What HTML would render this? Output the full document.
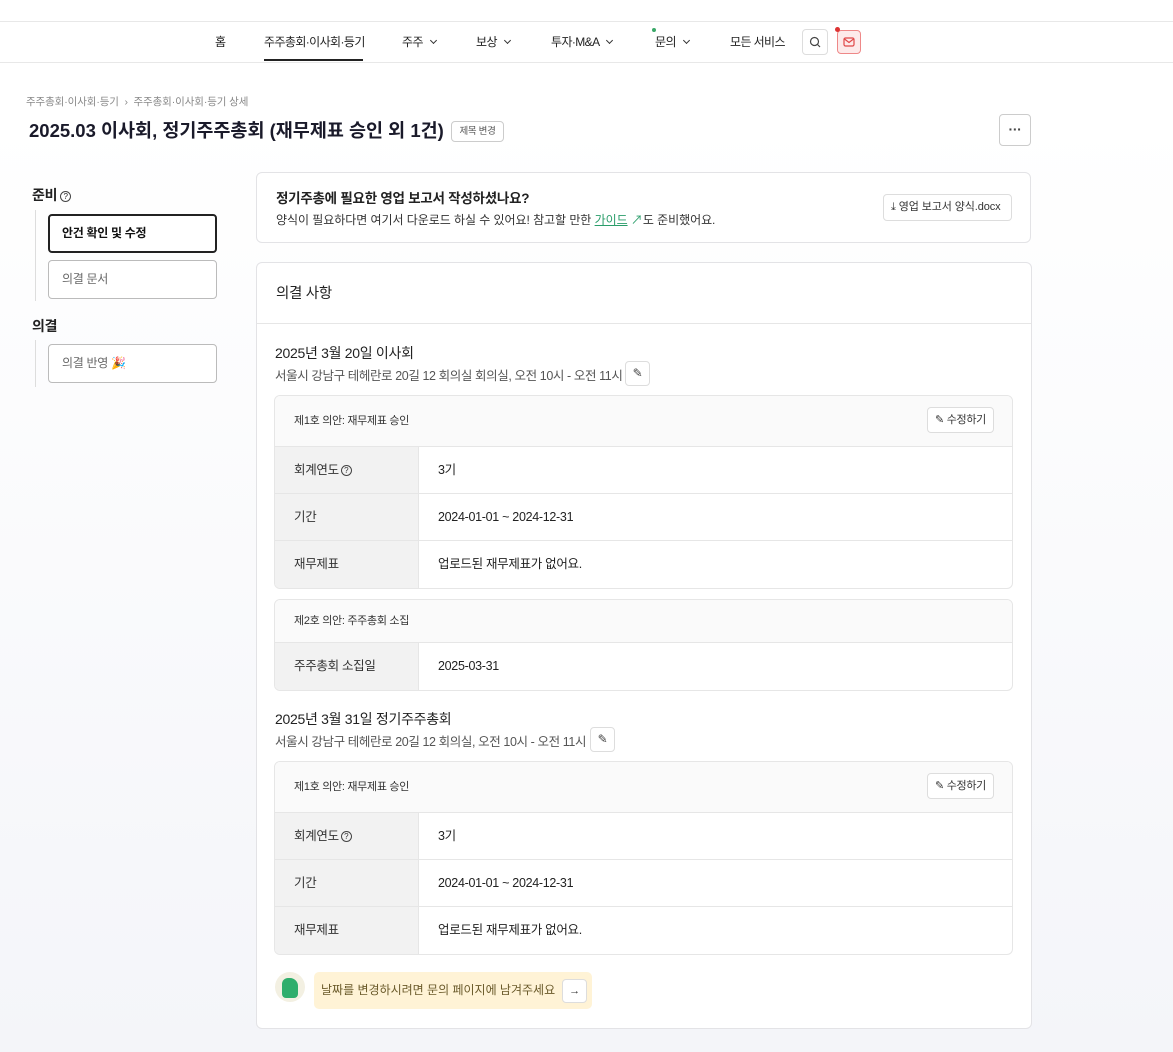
<!DOCTYPE html>
<html><head><meta charset="utf-8"><style>
*{box-sizing:border-box;margin:0;padding:0}
body{width:1173px;height:1052px;overflow:hidden;font-family:"Liberation Sans","Noto Sans CJK KR",sans-serif;color:#222;background:linear-gradient(#fff 0,#fff 120px,#f4f5f9 1052px);position:relative;font-size:13px;letter-spacing:-0.3px}
.a{position:absolute}
.nav{top:21px;left:0;width:1173px;height:42px;border-top:1px solid #e8e8e8;border-bottom:1px solid #e8e8e8;background:#fff}
.ni{position:absolute;top:11px;font-size:12px;color:#222;white-space:nowrap;letter-spacing:-0.6px}
.chev{display:inline-block;width:5px;height:5px;border-right:1.5px solid #333;border-bottom:1.5px solid #333;transform:rotate(45deg);margin-left:8px;position:relative;top:-3px}
.btn{position:absolute;background:#fff;border:1px solid #ddd;border-radius:4px}
.card{position:absolute;background:#fff;border:1px solid #e3e3e6;border-radius:6px}
.tbl{position:absolute;left:274px;width:739px;border:1px solid #e6e6e6;border-radius:6px;overflow:hidden;background:#fff}
.th{background:#fafafa;border-bottom:1px solid #e6e6e6;position:relative;font-size:11px;color:#333;padding-left:19px}
.tr{display:flex;height:47px;border-bottom:1px solid #e6e6e6;font-size:12.5px}
.tr:last-child{border-bottom:none}
.tl{width:144px;background:#f2f2f2;border-right:1px solid #e6e6e6;padding-left:19px;line-height:46px;color:#333}
.tv{padding-left:19px;line-height:46px;color:#222}
.q{display:inline-block;width:11px;height:11px;border:1px solid #444;border-radius:50%;font-size:8px;line-height:9px;text-align:center;vertical-align:middle;margin-left:2px;letter-spacing:0}
.edit{position:absolute;right:18px;top:11px;height:26px;padding:0 7px;border:1px solid #ddd;border-radius:4px;font-size:11px;line-height:24px;background:#fff}
.sb{position:absolute;left:48px;width:169px;height:39px;border:1px solid #bbb;border-radius:4px;background:#fff;padding-left:13px;line-height:37px;font-size:12px;color:#666}
</style></head><body>
<div class="a nav">
<span class="ni" style="left:215px">홈</span>
<span class="ni" style="left:264px">주주총회·이사회·등기</span>
<div class="a" style="left:264px;top:37px;width:99px;height:2px;background:#222"></div>
<span class="ni" style="left:402px">주주<i class="chev"></i></span>
<span class="ni" style="left:476px">보상<i class="chev"></i></span>
<span class="ni" style="left:551px">투자·M&amp;A<i class="chev"></i></span>
<span class="ni" style="left:655px">문의<i class="chev"></i></span>
<div class="a" style="left:652px;top:6px;width:4px;height:4px;border-radius:50%;background:#3aa868"></div>
<span class="ni" style="left:730px">모든 서비스</span>
<div class="btn" style="left:802px;top:7px;width:26px;height:26px"><svg width="24" height="24" viewBox="0 0 24 24"><circle cx="11.5" cy="11.5" r="4" fill="none" stroke="#444" stroke-width="1.2"/><path d="M14.5 14.5l2.5 2.5" stroke="#444" stroke-width="1.2"/></svg></div>
<div class="btn" style="left:837px;top:8px;width:24px;height:24px;background:#fdeaea;border-color:#e88"><svg width="22" height="22" viewBox="0 0 22 22"><rect x="6" y="7" width="10" height="8" rx="1.5" fill="none" stroke="#e04848" stroke-width="1.2"/><path d="M6.5 8l4.5 3.5 4.5-3.5" fill="none" stroke="#e04848" stroke-width="1.2"/></svg></div>
<div class="a" style="left:835px;top:5px;width:5px;height:5px;border-radius:50%;background:#d33"></div>
</div>
<div class="a" style="left:26px;top:94px;font-size:10.5px;color:#888;letter-spacing:-0.1px">주주총회·이사회·등기 &nbsp;›&nbsp; 주주총회·이사회·등기 상세</div>
<div class="a" style="left:29px;top:117px;font-size:18.5px;font-weight:bold;color:#1a1a2a;letter-spacing:0">2025.03 이사회, 정기주주총회 (재무제표 승인 외 1건)</div>
<div class="btn" style="left:451px;top:121px;width:53px;height:21px;font-size:9.5px;color:#555;text-align:center;line-height:19px;border-color:#ccc">제목 변경</div>
<div class="btn" style="left:999px;top:114px;width:32px;height:32px;border-color:#ccc;text-align:center;line-height:28px;font-size:14px;font-weight:bold;color:#444">···</div>

<div class="a" style="left:32px;top:185px;font-size:14px;font-weight:bold">준비<span class="q" style="font-weight:normal;margin-left:3px">?</span></div>
<div class="a" style="left:35px;top:210px;width:1px;height:91px;background:#ddd"></div>
<div class="sb" style="top:214px;border:2px solid #222;color:#111;font-weight:bold;line-height:35px;padding-left:12px">안건 확인 및 수정</div>
<div class="sb" style="top:260px">의결 문서</div>
<div class="a" style="left:32px;top:316px;font-size:14px;font-weight:bold">의결</div>
<div class="a" style="left:35px;top:340px;width:1px;height:47px;background:#ddd"></div>
<div class="sb" style="top:344px">의결 반영 🎉</div>

<div class="card" style="left:256px;top:172px;width:775px;height:71px">
<div class="a" style="left:19px;top:14px;font-size:13.5px;font-weight:bold;color:#222;letter-spacing:-0.25px">정기주총에 필요한 영업 보고서 작성하셨나요?</div>
<div class="a" style="left:19px;top:38px;font-size:12px;color:#333;letter-spacing:-0.05px">양식이 필요하다면 여기서 다운로드 하실 수 있어요! 참고할 만한 <span style="color:#2a9d6a;text-decoration:underline">가이드</span> <span style="color:#2a9d6a">↗</span>도 준비했어요.</div>
<div class="btn" style="left:626px;top:21px;width:129px;height:27px;font-size:11px;line-height:25px;padding-left:7px;color:#333;letter-spacing:-0.1px">⤓ 영업 보고서 양식.docx</div>
</div>

<div class="card" style="left:256px;top:262px;width:776px;height:767px">
<div class="a" style="left:19px;top:19px;font-size:14.5px">의결 사항</div>
<div class="a" style="left:0;top:60px;width:774px;height:1px;background:#e6e6e6"></div>
</div>

<div class="a" style="left:275px;top:343px;font-size:14px">2025년 3월 20일 이사회</div>
<div class="a" style="left:275px;top:365px;font-size:12.5px;color:#555;letter-spacing:-0.4px">서울시 강남구 테헤란로 20길 12 회의실 회의실, 오전 10시 - 오전 11시</div>
<div class="btn" style="left:625px;top:361px;width:25px;height:25px;text-align:center;line-height:23px;font-size:12px;color:#444">✎</div>

<div class="tbl" style="top:395px">
<div class="th" style="height:51px;line-height:50px">제1호 의안: 재무제표 승인<span class="edit">✎ 수정하기</span></div>
<div class="tr"><div class="tl">회계연도<span class="q">?</span></div><div class="tv">3기</div></div>
<div class="tr"><div class="tl">기간</div><div class="tv">2024-01-01 ~ 2024-12-31</div></div>
<div class="tr"><div class="tl">재무제표</div><div class="tv">업로드된 재무제표가 없어요.</div></div>
</div>

<div class="tbl" style="top:599px">
<div class="th" style="height:43px;line-height:42px">제2호 의안: 주주총회 소집</div>
<div class="tr"><div class="tl">주주총회 소집일</div><div class="tv">2025-03-31</div></div>
</div>

<div class="a" style="left:275px;top:709px;font-size:14px">2025년 3월 31일 정기주주총회</div>
<div class="a" style="left:275px;top:731px;font-size:12.5px;color:#555;letter-spacing:-0.4px">서울시 강남구 테헤란로 20길 12 회의실, 오전 10시 - 오전 11시</div>
<div class="btn" style="left:590px;top:727px;width:25px;height:25px;text-align:center;line-height:23px;font-size:12px;color:#444">✎</div>

<div class="tbl" style="top:761px">
<div class="th" style="height:51px;line-height:50px">제1호 의안: 재무제표 승인<span class="edit">✎ 수정하기</span></div>
<div class="tr"><div class="tl">회계연도<span class="q">?</span></div><div class="tv">3기</div></div>
<div class="tr"><div class="tl">기간</div><div class="tv">2024-01-01 ~ 2024-12-31</div></div>
<div class="tr"><div class="tl">재무제표</div><div class="tv">업로드된 재무제표가 없어요.</div></div>
</div>

<div class="a" style="left:275px;top:972px;width:30px;height:30px;border-radius:50%;background:#f3f0e2;overflow:hidden"><div class="a" style="left:7px;top:6px;width:16px;height:20px;border-radius:6px 8px 4px 4px;background:#2fae6c"></div></div>
<div class="a" style="left:314px;top:972px;width:278px;height:37px;border-radius:5px;background:#fff3d6;font-size:12px;color:#6a5a2a;line-height:37px;padding-left:7px;letter-spacing:0">날짜를 변경하시려면 문의 페이지에 남겨주세요</div>
<div class="btn" style="left:562px;top:979px;width:25px;height:24px;text-align:center;line-height:22px;font-size:11px;color:#333">→</div>
</body></html>
